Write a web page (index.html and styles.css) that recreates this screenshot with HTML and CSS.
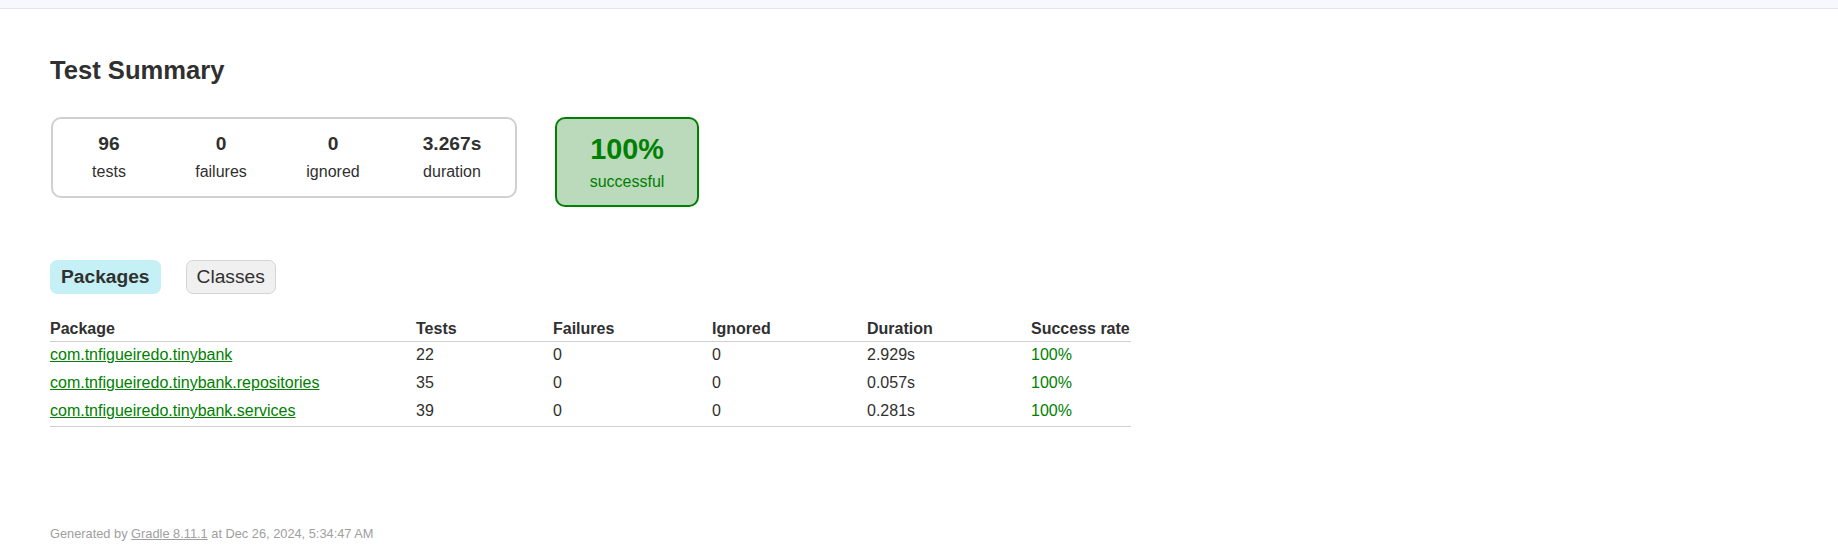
FILE: index.html
```html
<!DOCTYPE html>
<html lang="en">
<head>
<meta charset="utf-8">
<title>Test results - Test Summary</title>
<link rel="stylesheet" href="styles.css">
</head>
<body>
<div class="topbar"></div>
<div class="content">
  <h1 class="title">Test Summary</h1>
  <div class="summary">
    <div class="summary-group">
      <div class="info-box">
        <div class="counter">96</div>
        <p class="label">tests</p>
      </div>
      <div class="info-box">
        <div class="counter">0</div>
        <p class="label">failures</p>
      </div>
      <div class="info-box">
        <div class="counter">0</div>
        <p class="label">ignored</p>
      </div>
      <div class="info-box info-duration">
        <div class="counter">3.267s</div>
        <p class="label">duration</p>
      </div>
    </div>
    <div class="success-rate">
      <div class="percent">100%</div>
      <p class="label">successful</p>
    </div>
  </div>

  <ul class="tabs">
    <li class="tab tab-selected"><a href="#packages">Packages</a></li>
    <li class="tab"><a href="#classes">Classes</a></li>
  </ul>

  <table class="results">
    <colgroup>
      <col class="col-package">
      <col class="col-tests">
      <col class="col-failures">
      <col class="col-ignored">
      <col class="col-duration">
      <col class="col-rate">
    </colgroup>
    <thead>
      <tr>
        <th>Package</th>
        <th>Tests</th>
        <th>Failures</th>
        <th>Ignored</th>
        <th>Duration</th>
        <th>Success rate</th>
      </tr>
    </thead>
    <tbody>
      <tr>
        <td><a class="pkg-link" href="#p1">com.tnfigueiredo.tinybank</a></td>
        <td>22</td>
        <td>0</td>
        <td>0</td>
        <td>2.929s</td>
        <td class="ok">100%</td>
      </tr>
      <tr>
        <td><a class="pkg-link" href="#p2">com.tnfigueiredo.tinybank.repositories</a></td>
        <td>35</td>
        <td>0</td>
        <td>0</td>
        <td>0.057s</td>
        <td class="ok">100%</td>
      </tr>
      <tr class="last-row">
        <td><a class="pkg-link" href="#p3">com.tnfigueiredo.tinybank.services</a></td>
        <td>39</td>
        <td>0</td>
        <td>0</td>
        <td>0.281s</td>
        <td class="ok">100%</td>
      </tr>
    </tbody>
  </table>

  <div class="footer">
    Generated by <a class="footer-link" href="#gradle">Gradle 8.11.1</a> at Dec 26, 2024, 5:34:47 AM
  </div>
</div>
</body>
</html>
```

FILE: styles.css
```css
html, body {
  margin: 0;
  padding: 0;
  background: #ffffff;
}

body {
  font-family: "Liberation Sans", Arial, sans-serif;
  font-size: 16px;
  color: #303030;
}

.topbar {
  height: 8px;
  background: #f7f8fd;
  border-bottom: 1px solid #e1e3ef;
}

.content {
  padding: 46px 50px 0 50px;
}

.title {
  margin: 0;
  font-size: 25.6px;
  line-height: 30px;
  font-weight: bold;
  white-space: nowrap;
}

.summary {
  display: flex;
  align-items: flex-start;
  gap: 38px;
  margin-top: 32px;
  padding-left: 1px;
}

.summary-group {
  display: flex;
  border: 2px solid #d0d0d0;
  border-radius: 10px;
}

.info-box {
  width: 112px;
  padding: 14px 0 15px 0;
  text-align: center;
}

.info-duration {
  width: 126px;
}

.counter {
  font-size: 19.2px;
  line-height: 22px;
  font-weight: bold;
  margin-bottom: 8px;
}

.label {
  margin: 0;
  font-size: 16px;
  line-height: 18px;
}

.success-rate {
  width: 140px;
  padding: 14px 0 14px 0;
  text-align: center;
  border: 2px solid #008000;
  border-radius: 10px;
  background: #bbd9bb;
  color: #008000;
}

.percent {
  font-size: 28.8px;
  line-height: 32px;
  font-weight: bold;
  margin-bottom: 8px;
}

.tabs {
  display: flex;
  gap: 25px;
  list-style: none;
  margin: 53px 0 0 0;
  padding: 0;
}

.tab {
  padding: 5px 10px;
  border: 1px solid #d4d4d4;
  border-radius: 7px;
  background: #f0f0f0;
  font-size: 19.2px;
  line-height: 22px;
}

.tab a {
  color: #303030;
  text-decoration: none;
}

.tab-selected {
  background: #c5f0f5;
  border-color: #c5f0f5;
}

.tab-selected a {
  font-weight: bold;
}

.results {
  margin-top: 26px;
  border-collapse: collapse;
  table-layout: fixed;
  width: 1081px;
}

.col-package { width: 366px; }
.col-tests { width: 137px; }
.col-failures { width: 159px; }
.col-ignored { width: 155px; }
.col-duration { width: 164px; }
.col-rate { width: 100px; }

.results th,
.results td {
  text-align: left;
  white-space: nowrap;
  font-size: 16px;
  line-height: 18px;
  padding: 0;
}

.results th {
  font-weight: bold;
  padding-bottom: 3px;
  border-bottom: 1px solid #d0d0d0;
}

.results td {
  padding: 4px 0 6px 0;
}

.results .last-row td {
  border-bottom: 1px solid #d0d0d0;
}

.pkg-link {
  color: #008000;
  text-decoration: underline;
}

.ok {
  color: #008000;
}

.footer {
  margin-top: 99px;
  font-size: 12.8px;
  line-height: 15px;
  color: #a0a0a0;
  white-space: nowrap;
}

.footer-link {
  color: #a0a0a0;
  text-decoration: underline;
}
```
